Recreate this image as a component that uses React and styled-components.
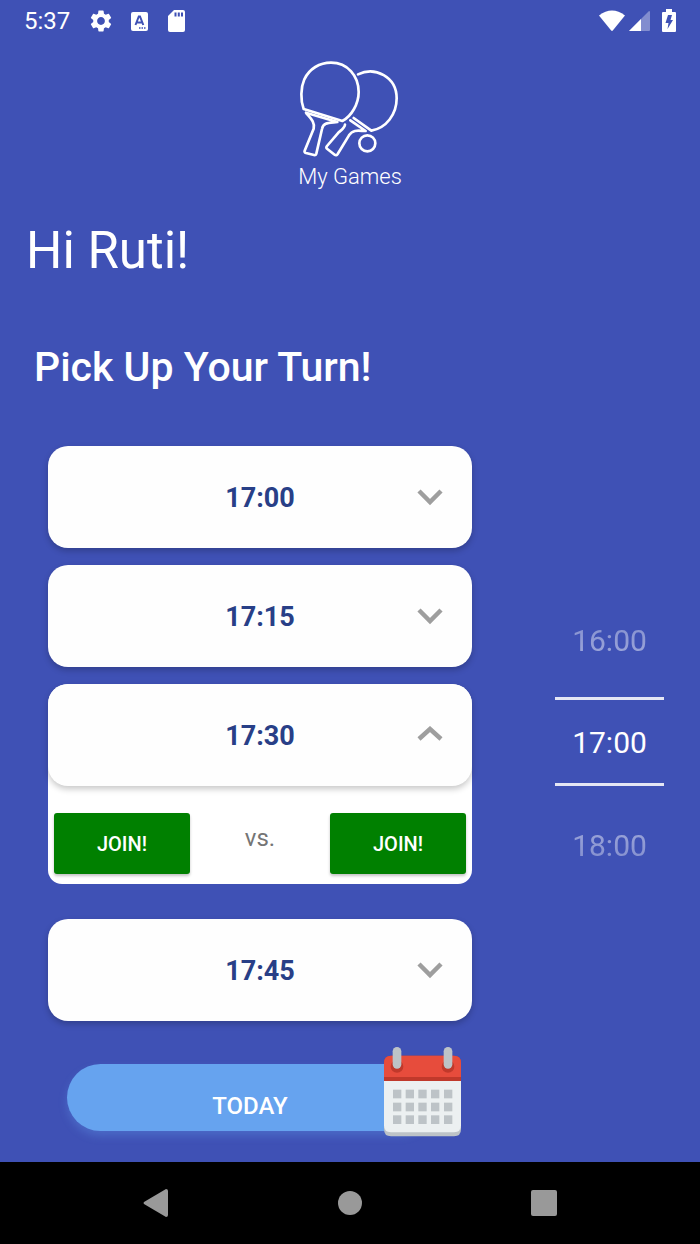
import React, { useState } from "react";
import styled, { createGlobalStyle } from "styled-components";
import { MdSettings } from "react-icons/md";

const GlobalStyle = createGlobalStyle`
  * { box-sizing: border-box; }
  body { margin: 0; background: #3f51b5; font-family: Roboto, "Liberation Sans", sans-serif; }
  button { font-family: inherit; border: 0; padding: 0; margin: 0; cursor: pointer; }
  svg { display: block; }
`;

const Screen = styled.div`
  min-height: 100vh;
  display: flex;
  flex-direction: column;
  background: #3f51b5;
  color: #fff;
`;

const StatusBar = styled.header`
  display: flex;
  align-items: center;
  justify-content: space-between;
  height: 42px;
  padding: 0 24px;
  font-size: 24px;
  line-height: 32px;
`;

const StatusGroup = styled.div`
  display: flex;
  align-items: center;
  gap: ${(p) => p.$gap}px;
`;

const Clock = styled.span`
  padding-right: 2px;
`;

const Brand = styled.div`
  display: flex;
  flex-direction: column;
  align-items: center;
  padding-top: 19px;
`;

const BrandName = styled.p`
  margin: 0;
  padding-top: 5px;
  font-size: 22px;
  line-height: 30px;
  font-weight: 300;
`;

const Greeting = styled.h1`
  margin: 29px 26px 0;
  font-size: 51px;
  line-height: 60px;
  font-weight: 400;
`;

const Prompt = styled.h2`
  margin: 62px 34px 0;
  font-size: 41px;
  line-height: 48px;
  font-weight: 500;
`;

const Content = styled.main`
  display: flex;
  align-items: flex-start;
  gap: 83px;
  padding: 55px 36px 0 48px;
`;

const Schedule = styled.div`
  flex: 1;
  display: flex;
  flex-direction: column;
`;

const SlotList = styled.ul`
  list-style: none;
  margin: 0;
  padding: 0;
  display: flex;
  flex-direction: column;
  gap: 17px;
`;

const Slot = styled.li`
  border-radius: 20px 20px 14px 14px;
  background: ${(p) => (p.$open ? "#fff" : "transparent")};
  margin-bottom: ${(p) => (p.$open ? 18 : 0)}px;
`;

const SlotHeader = styled.button`
  display: grid;
  grid-template-columns: 1fr auto 1fr;
  align-items: center;
  width: 100%;
  height: 102px;
  padding: 2px 29px 0;
  border-radius: 20px;
  background: #fefefe;
  box-shadow: 0 3px 6px rgba(0, 0, 0, 0.22);
  color: #283f87;
  font-size: 27px;
  line-height: 32px;
  font-weight: 700;
`;

const SlotTime = styled.span`
  grid-column: 2;
`;

const Chevron = styled.svg`
  justify-self: end;
`;

const Match = styled.div`
  display: flex;
  align-items: center;
  justify-content: space-between;
  padding: 27px 6px 10px;
`;

const JoinButton = styled.button`
  width: 33%;
  height: 61px;
  border-radius: 3px;
  background: #008000;
  color: #fff;
  box-shadow: 0 2px 3px rgba(0, 0, 0, 0.24);
  font-size: 20px;
  line-height: 24px;
  font-weight: 500;
`;

const Versus = styled.span`
  padding-bottom: 12px;
  color: #757575;
  font-size: 24px;
  line-height: 28px;
`;

const DayButton = styled.button`
  position: relative;
  height: 67px;
  margin: 43px 39px 0 19px;
  padding-top: 16px;
  border-radius: 34px;
  background: #66a3ef;
  box-shadow: 0 5px 8px rgba(102, 163, 239, 0.3);
  color: #fff;
  font-size: 24px;
  line-height: 32px;
  font-weight: 500;
`;

const CalendarIcon = styled.svg`
  position: absolute;
  right: -28px;
  bottom: -6px;
`;

const Picker = styled.div`
  width: 109px;
  margin-top: 135px;
  display: flex;
  flex-direction: column;
`;

const Hour = styled.button`
  height: ${(p) => (p.$selected ? 89 : 116)}px;
  padding-top: 3px;
  border-style: solid;
  border-color: #e4e6f4;
  border-width: ${(p) => (p.$selected ? "3px 0" : "0")};
  background: transparent;
  color: #fff;
  font-size: 30px;
  line-height: 36px;
  mask-image: ${(p) =>
    p.$selected
      ? "none"
      : `linear-gradient(to ${p.$before ? "bottom" : "top"}, rgba(0, 0, 0, 0.2), rgba(0, 0, 0, 0.65))`};
`;

const NavBar = styled.nav`
  display: flex;
  align-items: center;
  justify-content: center;
  gap: 150px;
  height: 82px;
  margin-top: auto;
  background: #000;
`;

const NavButton = styled.button`
  display: flex;
  align-items: center;
  justify-content: center;
  width: 44px;
  height: 44px;
  background: transparent;
  color: #999;
`;

const slots = ["17:00", "17:15", "17:30", "17:45"];
const hours = ["16:00", "17:00", "18:00"];

function Paddles() {
  return (
    <svg width="102" height="96" viewBox="57 33 306 288" fill="none" stroke="#fff" strokeWidth="8" strokeLinejoin="round" strokeLinecap="round" aria-hidden="true">
      <path d="M71 177C61 150 62 113 73 88C88 56 119 38 153 38C203 38 236 78 236 126C236 162 214 199 187 213Z" />
      <path d="M78 188L172 216C145 219 130 217 126 237L109 311Q107 316 102 315L78 309Q72 307 74 302L101 236C105 216 93 206 79 190" />
      <path d="M234 73C285 48 350 80 350 145C350 193 319 234 274 242L221 204" />
      <path d="M211 211L257 243C239 243 220 236 207 256L173 312Q169 318 164 314L142 297Q137 293 141 288L176 247C187 238 194 234 195 224" />
      <circle cx="262" cy="280" r="24" />
    </svg>
  );
}

function Calendar() {
  const columns = [69, 107, 145, 183, 222];
  const rows = [165, 204, 242];
  return (
    <CalendarIcon width="77" height="90" viewBox="42 37 231 270" aria-hidden="true">
      <path d="M42 135H273V284Q273 305 252 305H63Q42 305 42 284Z" fill="#bdc3c7" />
      <path d="M42 135H273V272Q273 293 252 293H63Q42 293 42 272Z" fill="#ecf0f1" />
      <path d="M42 139V84Q42 63 63 63H252Q273 63 273 84V139Z" fill="#c0392b" />
      <path d="M42 127V84Q42 63 63 63H252Q273 63 273 84V127Z" fill="#e74c3c" />
      {[81, 234].map((x) => (
        <g key={x}>
          <path d={`M${x - 13} 81Q${x - 19} 87 ${x - 19} 96A19 18 0 0 0 ${x + 19} 96Q${x + 19} 87 ${x + 13} 81Z`} fill="#c0392b" />
          <rect x={x - 13} y="37" width="26" height="65" rx="13" fill="#bdc3c7" />
        </g>
      ))}
      {rows.map((y) => columns.map((x) => <rect key={`${x}-${y}`} x={x} y={y} width="25" height="26" fill="#bdc3c7" />))}
    </CalendarIcon>
  );
}

export default function App() {
  const [openSlot, setOpenSlot] = useState("17:30");
  const [hour, setHour] = useState("17:00");

  return (
    <Screen>
      <GlobalStyle />
      <StatusBar>
        <StatusGroup $gap={16}>
          <Clock>5:37</Clock>
          <MdSettings size={26} />
          <svg width="18" height="19" viewBox="-1 0 18 19" aria-hidden="true">
            <rect width="17" height="19" rx="2" fill="#fff" />
            <path d="M4.500 13L7.800 4.500H9L12.300 13M6 10.500H11" fill="none" stroke="#3f51b5" strokeWidth="2" />
            <path d="M8 16H15" stroke="#3f51b5" strokeWidth="1.5" strokeDasharray="1.5 1" />
          </svg>
          <svg width="22" height="22" viewBox="-4 0 22 22" aria-hidden="true">
            <path d="M6 0H15Q17 0 17 2V20Q17 22 15 22H2Q0 22 0 20V6Z" fill="#fff" />
            <path d="M7.500 2.500V6.500M10.800 2.500V6.500M14 2.500V6.500" stroke="#3f51b5" strokeWidth="2" />
          </svg>
        </StatusGroup>
        <StatusGroup $gap={3}>
          <svg width="27" height="22" viewBox="0 0 27 22" aria-hidden="true">
            <path d="M0 5.500Q13 -4.500 26 5.500L13.800 20.500Q13 21.300 12.200 20.500Z" fill="#fff" />
          </svg>
          <svg width="21" height="21" viewBox="0 0 21 21" aria-hidden="true">
            <path d="M0 20L20 0Q21 0 21 1V19Q21 20 20 20Z" fill="#fff" opacity="0.35" />
            <path d="M0 20L12 8V20Z" fill="#fff" />
          </svg>
          <svg width="23" height="24" viewBox="-9 0 23 24" aria-hidden="true">
            <path d="M4 0H10V3H13Q14 3 14 4V22Q14 23 13 23H1Q0 23 0 22V4Q0 3 1 3H4Z" fill="#fff" />
            <path d="M6 6H10L8.500 11H11L5.500 20L6.500 14H3.500Z" fill="#3f51b5" />
          </svg>
        </StatusGroup>
      </StatusBar>

      <Brand>
        <Paddles />
        <BrandName>My Games</BrandName>
      </Brand>

      <Greeting>Hi Ruti!</Greeting>
      <Prompt>Pick Up Your Turn!</Prompt>

      <Content>
        <Schedule>
          <SlotList>
            {slots.map((time) => {
              const open = time === openSlot;
              return (
                <Slot key={time} $open={open}>
                  <SlotHeader aria-expanded={open} onClick={() => setOpenSlot(open ? null : time)}>
                    <SlotTime>{time}</SlotTime>
                    <Chevron width="26" height="20" viewBox="0 0 26 20" aria-hidden="true">
                      <path d={open ? "M2 13L13 3L24 13" : "M2 3L13 14L24 3"} fill="none" stroke="#9e9e9e" strokeWidth="4.500" />
                    </Chevron>
                  </SlotHeader>
                  {open && (
                    <Match>
                      <JoinButton>JOIN!</JoinButton>
                      <Versus>vs.</Versus>
                      <JoinButton>JOIN!</JoinButton>
                    </Match>
                  )}
                </Slot>
              );
            })}
          </SlotList>
          <DayButton>
            TODAY
            <Calendar />
          </DayButton>
        </Schedule>

        <Picker role="group" aria-label="Hour">
          {hours.map((h) => (
            <Hour key={h} $selected={h === hour} $before={h < hour} aria-pressed={h === hour} onClick={() => setHour(h)}>
              {h}
            </Hour>
          ))}
        </Picker>
      </Content>

      <NavBar>
        <NavButton aria-label="Back">
          <svg width="26" height="28" viewBox="0 0 26 28">
            <path d="M1 13Q0 14 1 15L23 28Q25 28 25 26V2Q25 0 23 0Z" fill="currentColor" />
          </svg>
        </NavButton>
        <NavButton aria-label="Home">
          <svg width="24" height="24" viewBox="0 0 24 24">
            <circle cx="12" cy="12" r="12" fill="currentColor" />
          </svg>
        </NavButton>
        <NavButton aria-label="Recent apps">
          <svg width="26" height="26" viewBox="0 0 26 26">
            <rect width="26" height="26" rx="2" fill="currentColor" />
          </svg>
        </NavButton>
      </NavBar>
    </Screen>
  );
}
